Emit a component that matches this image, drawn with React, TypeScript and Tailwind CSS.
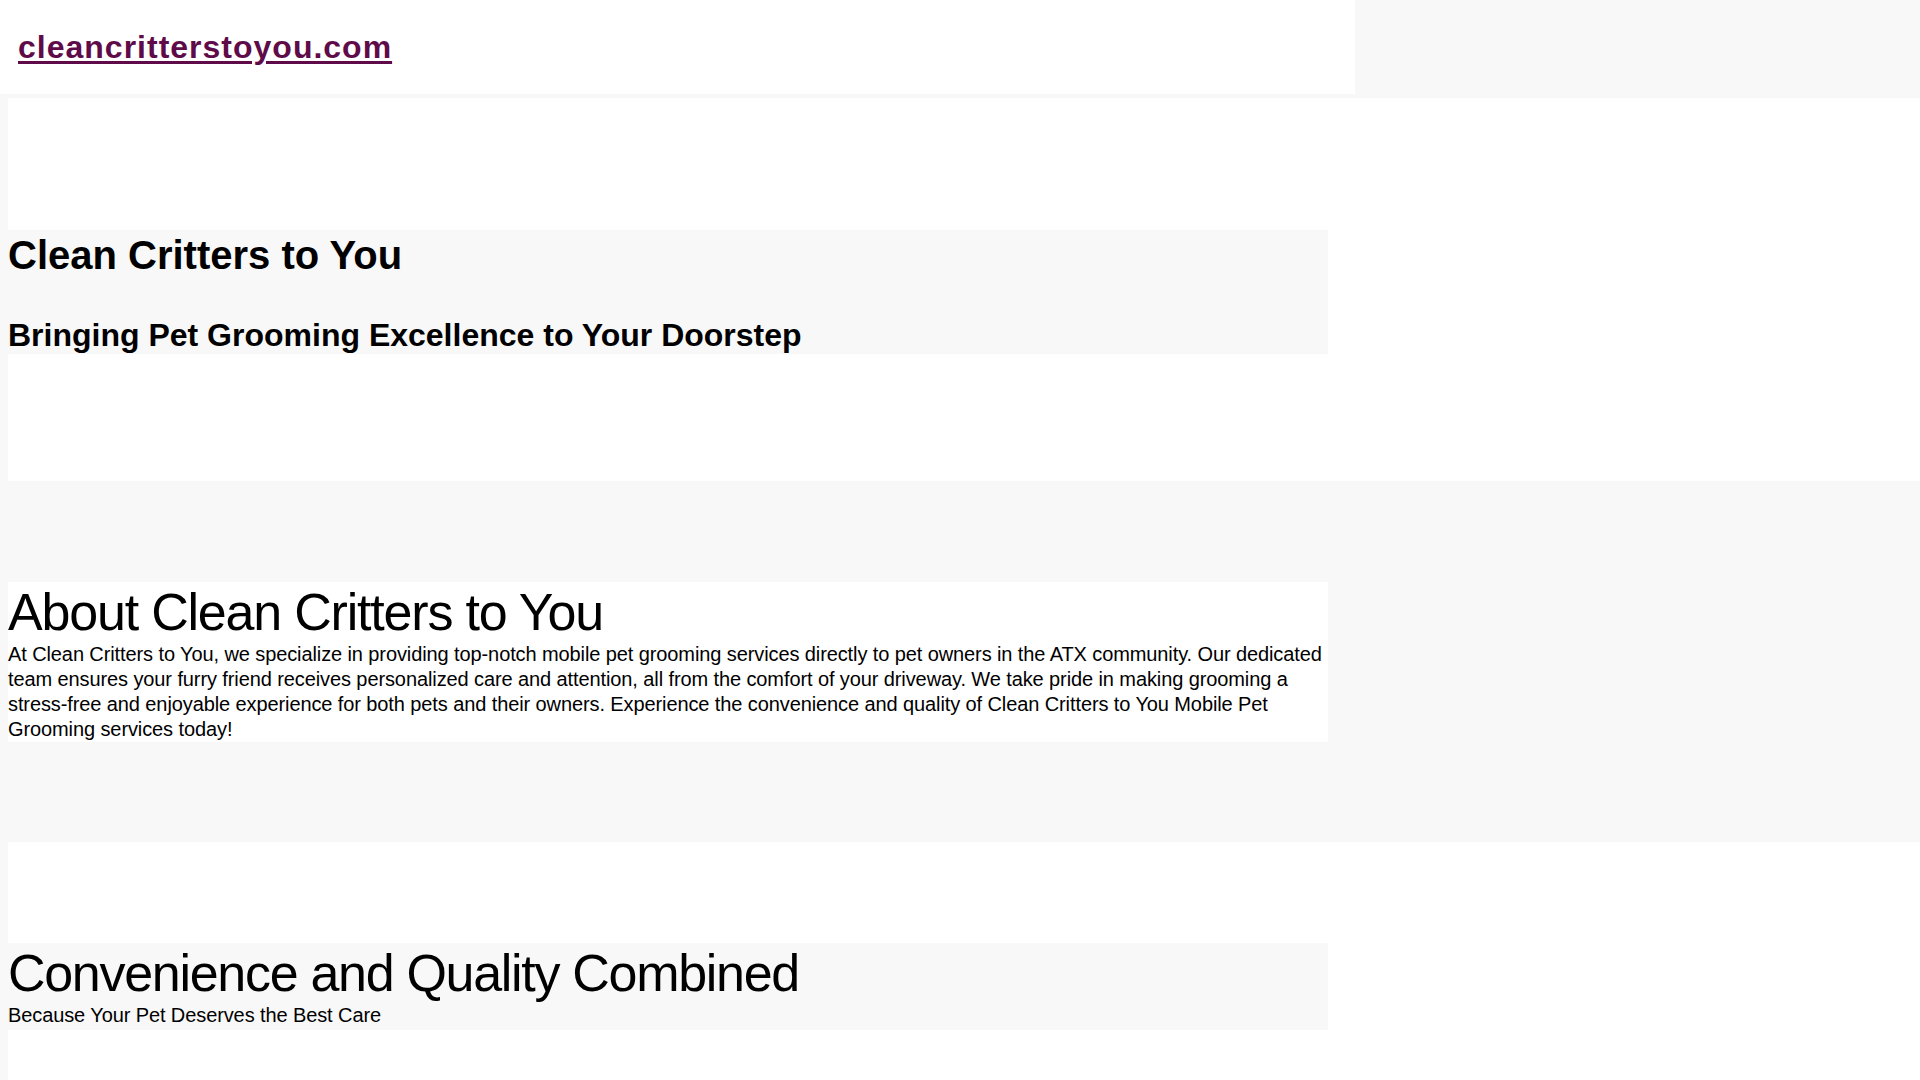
export default function App() {
  return (
    <div className="h-screen w-full overflow-auto bg-[#f8f8f8] font-['Liberation_Sans',Arial,sans-serif] text-black [&::-webkit-scrollbar]:h-[15px] [&::-webkit-scrollbar]:w-[15px] [&::-webkit-scrollbar]:bg-[#f1f1f1] [&::-webkit-scrollbar-button]:h-[15px] [&::-webkit-scrollbar-button]:w-[15px] [&::-webkit-scrollbar-button]:bg-[#f1f1f1] [&::-webkit-scrollbar-corner]:bg-[#dcdcdc] [&::-webkit-scrollbar-thumb]:border-2 [&::-webkit-scrollbar-thumb]:border-solid [&::-webkit-scrollbar-thumb]:border-[#f1f1f1] [&::-webkit-scrollbar-thumb]:bg-[#c1c1c1] [&::-webkit-scrollbar-track]:bg-[#f1f1f1]">
      <div className="min-h-[3213px]">
        <header className="flex h-[94px] w-[1355px] items-center bg-white px-[18px]">
          <a href="#" className="text-[32px] font-bold tracking-[1px] text-[#600b49] underline decoration-[3px] underline-offset-[3px]">
            cleancritterstoyou.com
          </a>
        </header>

        {/* hero */}
        <section className="ml-2 mt-[4px] w-full bg-white pt-[132px] pb-[127px]">
          <div className="w-[1320px] bg-[#f8f8f8] pt-[2px] pb-[1px]">
            <h1 className="text-[40px] font-bold leading-[46px]">Clean Critters to You</h1>
            <h2 className="mt-[39px] text-[32px] font-bold leading-[36px]">
              Bringing Pet Grooming Excellence to Your Doorstep
            </h2>
          </div>
        </section>

        {/* about */}
        <section className="ml-2 mt-[101px] w-[1320px] bg-white">
          <h2 className="text-[52px] leading-[60px] tracking-[-1.2px]">About Clean Critters to You</h2>
          <p className="text-[20px] leading-[25px] tracking-[-0.1px]">
            At Clean Critters to You, we specialize in providing top-notch mobile pet grooming services directly to pet
            owners in the ATX community. Our dedicated team ensures your furry friend receives personalized care and
            attention, all from the comfort of your driveway. We take pride in making grooming a stress-free and
            enjoyable experience for both pets and their owners. Experience the convenience and quality of Clean
            Critters to You Mobile Pet Grooming services today!
          </p>
        </section>

        {/* quality */}
        <section className="ml-2 mt-[100px] w-full bg-white pt-[101px] pb-[100px]">
          <div className="w-[1320px] bg-[#f8f8f8]">
            <h2 className="text-[52px] leading-[60px] tracking-[-1.3px]">Convenience and Quality Combined</h2>
            <p className="pb-[2px] text-[20px] leading-[25px] tracking-[-0.1px]">
              Because Your Pet Deserves the Best Care
            </p>
          </div>
        </section>
      </div>
    </div>
  );
}
